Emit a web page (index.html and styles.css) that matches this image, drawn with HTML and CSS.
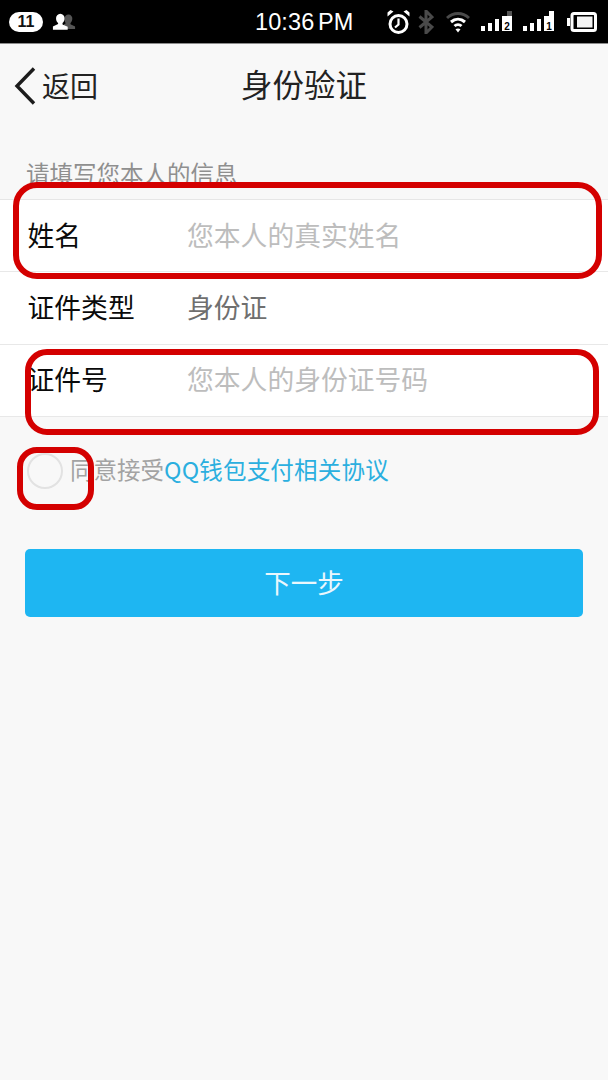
FILE: index.html
```html
<!DOCTYPE html>
<html lang="zh">
<head>
<meta charset="utf-8">
<title>身份验证</title>
<link rel="stylesheet" href="styles.css">
</head>
<body>
<div class="screen">
  <header class="status">
    <div class="status-left">
      <span class="badge">11</span>
      <svg class="ic-people" viewBox="0 0 26 18"><path class="dim" d="M18 1.500a4.200 4.200 0 0 1 4 4.600c0 2-1 3.600-2 4.400v1.600l5 2.400V17H13v-5l2-1c-1-1-1.400-2.800-1.400-4.800A4.300 4.300 0 0 1 18 1.500z"/><path class="lit" d="M9 .5a4.800 4.800 0 0 1 4.600 5.200c0 2.200-1 4-2.200 4.900v1.700l5.600 2.500V18H1v-3.700l5.600-2.500v-1.200C5.400 9.700 4.400 7.900 4.400 5.700A4.800 4.800 0 0 1 9 .5z"/></svg>
    </div>
    <span class="clock">10:36 PM</span>
    <div class="status-right">
      <svg class="ic-alarm" viewBox="0 0 23 24"><circle class="line" cx="11.500" cy="14" r="8.500"/><path class="line thin" d="M11.500 8.500v6l-3.500 3"/><path class="lit" d="M.5 6.500 6.500 1.500 3.500 0 .5 2.500zM22.500 6.500 16.500 1.500 19.500 0 22.500 2.500z"/></svg>
      <svg class="ic-bt" viewBox="0 0 16 24"><path class="line dimline" d="M1.500 6.500 14 17l-6 6V1l6 6L1.500 17.500"/></svg>
      <svg class="ic-wifi" viewBox="0 0 24 22"><path class="line dimline" d="M1 7C7.500 1 16.500 1 23 7"/><path class="line" d="M5 11c4.200-3.700 9.800-3.700 14 0M8.500 15c2-1.800 5-1.800 7 0"/><path class="lit" d="M12 21.500 9.500 18.300c1.500-1 3.500-1 5 0z"/></svg>
      <svg class="ic-signal" viewBox="0 0 32 21"><path class="lit" d="M0 15h4v5H0zM7 12h4v8H7zM14 8h4v12h-4z"/><path class="lit" d="M21 5h10v15H21z"/><path class="dim" d="M26 0h5v5h-5z"/><text class="sim" x="26" y="18.500">2</text></svg>
      <svg class="ic-signal last" viewBox="0 0 32 21"><path class="lit" d="M0 15h4v5H0zM7 12h4v8H7zM14 8h4v12h-4z"/><path class="lit" d="M21 5h5V0h5v20H21z"/><text class="sim" x="26" y="18.500">1</text></svg>
      <svg class="ic-battery" viewBox="0 0 30 20"><path class="lit" d="M0 6h3v8H0z"/><rect class="line" x="5" y="1.500" width="23.500" height="17" rx="2"/><rect class="fill-soft" x="10" y="4.500" width="15.500" height="11"/></svg>
    </div>
  </header>

  <nav class="nav">
    <div class="back">
      <svg class="chevron" viewBox="0 0 22 38"><path d="M20 1.500 3 19l17 17.500"/></svg>
      <span>返回</span>
    </div>
    <h1 class="title">身份验证</h1>
  </nav>

  <p class="hint">请填写您本人的信息</p>

  <section class="form">
    <div class="row"><span class="label">姓名</span><span class="placeholder">您本人的真实姓名</span></div>
    <div class="row"><span class="label">证件类型</span><span class="value">身份证</span></div>
    <div class="row"><span class="label">证件号</span><span class="placeholder">您本人的身份证号码</span></div>
  </section>

  <div class="agree">
    <span class="check"></span>
    <span class="agree-text">同意接受<a class="link">QQ钱包支付相关协议</a></span>
  </div>

  <button class="next">下一步</button>

  <div class="mark mark-name"></div>
  <div class="mark mark-id"></div>
  <div class="mark mark-check"></div>
</div>
</body>
</html>
```
FILE: styles.css
```css
* { box-sizing: border-box; }
html, body { margin: 0; padding: 0; }
body {
  width: 608px;
  height: 1080px;
  overflow: hidden;
  background: #f8f8f8;
  font-family: "Noto Sans CJK SC", "Liberation Sans", sans-serif;
}
.screen { position: relative; width: 608px; height: 1080px; background: #f8f8f8; }

.status {
  position: relative;
  height: 44px;
  background: #000;
  border-bottom: 1px solid #8c8c8c;
  display: flex;
  align-items: center;
  justify-content: space-between;
  padding: 0 11px 0 9px;
}
.status-left { display: flex; align-items: center; gap: 9px; }
.badge {
  width: 34px;
  height: 20px;
  border-radius: 10px;
  background: #fff;
  color: #111;
  font: 700 16px/20px "Liberation Sans", sans-serif;
  text-align: center;
}
.ic-people { width: 24px; height: 17px; }
.clock {
  position: absolute;
  left: 255px;
  top: 9px;
  color: #fff;
  font: 400 23.500px/26px "Liberation Sans", sans-serif;
  word-spacing: -3px;
  letter-spacing: 0.1px;
  white-space: nowrap;
}
.status-right { display: flex; align-items: center; }
.status-right svg { display: block; flex: none; }
.lit { fill: #fff; }
.dim { fill: #555; }
.fill-soft { fill: #f4f4f4; }
.line { fill: none; stroke: #fff; stroke-width: 3; }
.thin { stroke-width: 2.200; }
.dimline { stroke: #4a4a4a; }
.sim { font: 700 10px "Liberation Sans", sans-serif; fill: #000; text-anchor: middle; }
.ic-alarm { width: 23px; height: 24px; margin-right: 8px; }
.ic-bt { width: 16px; height: 24px; margin-right: 12px; }
.ic-wifi { width: 24px; height: 22px; margin-right: 11px; }
.ic-signal { width: 32px; height: 21px; margin-right: 10px; }
.ic-signal.last { margin-right: 12px; }
.ic-battery { width: 30px; height: 20px; }

.nav { position: relative; height: 84px; display: flex; align-items: center; justify-content: center; }
.back {
  position: absolute;
  left: 14px;
  top: 21px;
  display: flex;
  align-items: center;
  gap: 6px;
  color: #222;
  font-size: 28px;
  line-height: 40px;
}
.chevron { width: 22px; height: 38px; fill: none; stroke: #1c1c1c; stroke-width: 3.400; position: relative; top: 1px; }
.title { margin: 0; color: #222; font-size: 31.500px; font-weight: 400; line-height: 44px; position: relative; top: -3px; }

.hint {
  margin: 0;
  height: 71px;
  padding: 27px 0 0 26px;
  color: #8f8f8f;
  font-size: 23.500px;
  line-height: 36px;
}

.form { background: #fff; border-top: 1px solid #e6e6e6; }
.row {
  height: 72.300px;
  display: flex;
  align-items: center;
  padding: 0 0 3px 27.500px;
  border-bottom: 1px solid #e8e8e8;
  font-size: 26.800px;
}
.label { width: 159.500px; color: #0a0a0a; }
.placeholder { color: #bdbdbd; }
.value { color: #6f6f6f; }

.agree { display: flex; align-items: center; height: 36px; margin-top: 36px; padding-left: 27px; }
.check { width: 36px; height: 36px; border-radius: 50%; border: 2px solid #e2e2e2; margin-right: 7px; flex: none; }
.agree-text { color: #a3a3a3; font-size: 23.500px; line-height: 36px; position: relative; top: -2px; }
.link { color: #2bafdf; letter-spacing: 0.2px; }

.next {
  display: block;
  width: 558px;
  height: 68px;
  margin: 60px 0 0 25px;
  padding: 0 0 3px;
  border: 0;
  border-radius: 5px;
  background: #1eb6f2;
  color: #eaf7fd;
  font-family: inherit;
  font-size: 26.500px;
}

.mark { position: absolute; border: 6px solid #d40000; background: transparent; }
.mark-name { left: 13px; top: 182px; width: 589px; height: 97px; border-radius: 24px; }
.mark-id { left: 25px; top: 349px; width: 574px; height: 86px; border-radius: 22px; }
.mark-check { left: 17px; top: 447px; width: 77px; height: 63px; border-radius: 20px; }
```
